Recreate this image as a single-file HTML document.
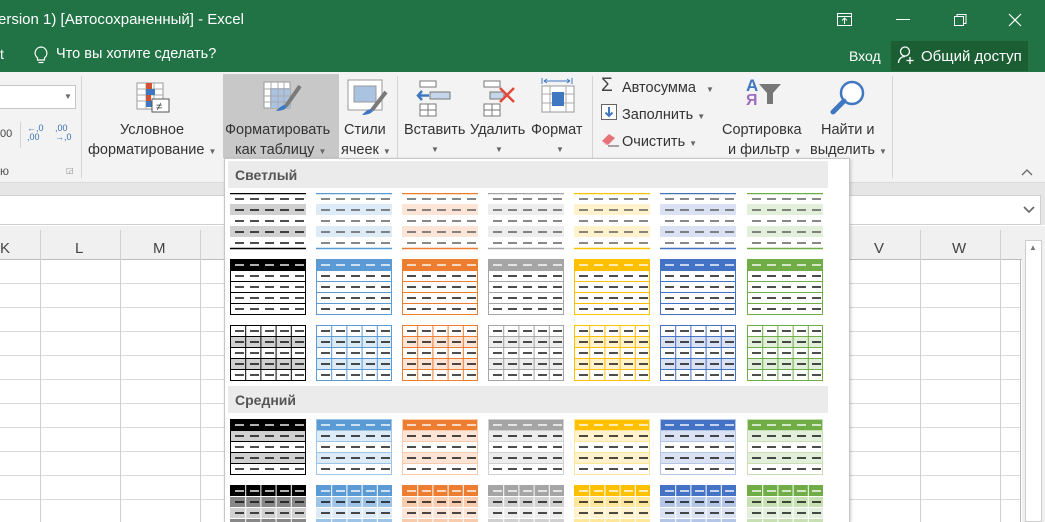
<!DOCTYPE html>
<html><head><meta charset="utf-8">
<style>
*{margin:0;padding:0;box-sizing:border-box}
html{width:1045px;height:522px;overflow:hidden}
body{width:1045px;height:522px;overflow:hidden;position:relative;background:#fff;font-family:"Liberation Sans","DejaVu Sans",sans-serif;color:#262626}
.a{position:absolute;white-space:nowrap}
#title{left:0;top:0;width:1045px;height:72px;background:#217346;color:#fff}
#ribbon{left:0;top:72px;width:1045px;height:111px;background:#f3f3f3;border-bottom:1px solid #dadada}
.t{font-size:14.5px;color:#333}
.sep{position:absolute;width:1px;background:#d4d4d4}
.car{font-size:8px;color:#666}
</style></head><body>
<div id="title" class="a">
 <div class="a" style="left:-2px;top:11px;font-size:15px">ersion 1) [Автосохраненный] - Excel</div>
 <div class="a" style="left:0;top:46px;font-size:14px">t</div>
 <svg class="a" style="left:33px;top:45px" width="16" height="20"><path d="M8 2a6 6 0 0 0-3.5 10.8V15h7v-2.2A6 6 0 0 0 8 2zM5.5 17.5h5" stroke="#fff" fill="none" stroke-width="1.2"/></svg>
 <div class="a" style="left:56px;top:46px;font-size:14.5px">Что вы хотите сделать?</div>
 <svg class="a" style="left:836px;top:12px" width="18" height="16"><rect x="1.5" y="1.5" width="14" height="12" stroke="#fff" fill="none"/><path d="M1.5 4.5h14M8.5 12V6M6 8.5l2.5-2.5 2.5 2.5" stroke="#fff" fill="none"/></svg>
 <div class="a" style="left:896px;top:19px;width:14px;height:1px;background:#fff"></div>
 <svg class="a" style="left:952px;top:12px" width="16" height="16"><rect x="2.5" y="4.5" width="9" height="9" stroke="#fff" fill="none"/><path d="M5 4.5V2.5h9v9h-2" stroke="#fff" fill="none"/></svg>
 <svg class="a" style="left:1007px;top:12px" width="16" height="16"><path d="M2 2l12 12M14 2L2 14" stroke="#fff" stroke-width="1.2"/></svg>
 <div class="a" style="left:849px;top:48px;font-size:14px">Вход</div>
 <div class="a" style="left:891px;top:41px;width:137px;height:30px;background:#1b5e34"></div>
 <svg class="a" style="left:897px;top:45px" width="20" height="20"><circle cx="8" cy="6.5" r="4.5" stroke="#fff" fill="none" stroke-width="1.3"/><path d="M1.5 18c0-4 3-6.5 6.5-6.5M13 12v7M9.5 15.5h7" stroke="#fff" fill="none" stroke-width="1.3"/></svg>
 <div class="a" style="left:921px;top:48px;font-size:15px">Общий доступ</div>
</div>

<div id="ribbon" class="a">
 <div class="a" style="left:0;top:13px;width:76px;height:24px;background:#fff;border:1px solid #c6c6c6;border-left:none"></div>
 <div class="a car" style="left:64px;top:20px">▼</div>
 <div class="a" style="left:0;top:56px;font-size:11px;color:#444">00</div>
 <div class="a" style="left:27px;top:52px;font-size:9px;color:#3a6fb0;line-height:9px">←,0<br>,00</div>
 <div class="a" style="left:55px;top:52px;font-size:9px;color:#3a6fb0;line-height:9px">,00<br>→,0</div>
 <div class="sep" style="left:20px;top:50px;height:26px"></div>
 <div class="a" style="left:0;top:92px;font-size:12px;color:#555">ю</div>
 <div class="a" style="left:66px;top:94px;font-size:8px;color:#888">◲</div>
 <div class="sep" style="left:81px;top:4px;height:102px"></div>

 <svg class="a" style="left:136px;top:10px" width="38" height="38"><rect x="1" y="1" width="26" height="26" fill="#fff" stroke="#999"/><path d="M1 7h26M1 13h26M1 19h26M10 1v26M18 1v26" stroke="#aaa"/><rect x="10" y="1" width="6" height="6" fill="#d35230"/><rect x="10" y="7" width="9" height="6" fill="#3f78c0"/><rect x="10" y="13" width="5" height="6" fill="#d35230"/><rect x="10" y="19" width="7" height="6" fill="#3f78c0"/><rect x="16" y="17" width="17" height="13" fill="#fff" stroke="#555"/><text x="20" y="28" font-size="11" fill="#333">≠</text></svg>
 <div class="a t" style="left:120px;top:50px">Условное</div>
 <div class="a t" style="left:88px;top:70px">форматирование <span class="car">▼</span></div>

 <div class="a" style="left:223px;top:2px;width:116px;height:84px;background:#c8c8c8"></div>
 <svg class="a" style="left:262px;top:8px" width="42" height="38"><rect x="2" y="2" width="26" height="26" fill="#fff" stroke="#999"/><rect x="8" y="8" width="20" height="20" fill="#a9c3e0"/><path d="M2 9h26M2 16h26M2 22h26M9 2v26M16 2v26M22 2v26" stroke="#aaa"/><path d="M38 6L24 26" stroke="#7a7a7a" stroke-width="4"/><path d="M23 25c-3 0-6 3-9 6 4 0 9-1 11-4z" fill="#3f78c0"/></svg>
 <div class="a t" style="left:225px;top:50px">Форматировать</div>
 <div class="a t" style="left:235px;top:70px">как таблицу <span class="car">▼</span></div>

 <svg class="a" style="left:346px;top:6px" width="42" height="40"><rect x="2" y="2" width="34" height="30" fill="#fff" stroke="#999"/><rect x="8" y="8" width="22" height="16" fill="#a9c3e0" stroke="#999"/><path d="M40 14L26 32" stroke="#7a7a7a" stroke-width="4"/><path d="M25 31c-3 0-6 3-9 6 4 0 9-1 11-4z" fill="#3f78c0"/></svg>
 <div class="a t" style="left:344px;top:50px">Стили</div>
 <div class="a t" style="left:341px;top:70px">ячеек <span class="car">▼</span></div>
 <div class="sep" style="left:397px;top:4px;height:102px"></div>

 <svg class="a" style="left:415px;top:8px" width="40" height="38"><rect x="5" y="1" width="16" height="6" fill="#fff" stroke="#777"/><rect x="15" y="12" width="20" height="7" fill="#c6d6ea" stroke="#777"/><path d="M14 15.5H3M7 11l-4 4.5 4 4.5" stroke="#3f78c0" stroke-width="2.5" fill="none"/><rect x="5" y="24" width="16" height="12" fill="#fff" stroke="#777"/><path d="M5 30h16M13 24v12" stroke="#777"/></svg>
 <div class="a t" style="left:404px;top:50px">Вставить</div>
 <div class="a car" style="left:431px;top:73px">▼</div>
 <svg class="a" style="left:480px;top:8px" width="40" height="38"><rect x="4" y="1" width="16" height="6" fill="#fff" stroke="#777"/><rect x="10" y="12" width="14" height="7" fill="#c6d6ea" stroke="#777"/><path d="M20 8l14 14M34 8L20 22" stroke="#e04a3a" stroke-width="2.5"/><rect x="4" y="24" width="16" height="12" fill="#fff" stroke="#777"/><path d="M4 30h16M12 24v12" stroke="#777"/></svg>
 <div class="a t" style="left:470px;top:50px">Удалить</div>
 <div class="a car" style="left:495px;top:73px">▼</div>
 <svg class="a" style="left:540px;top:4px" width="36" height="44"><path d="M2 2v6M32 2v6M4 5h26M4 5l3-2M4 5l3 2M30 5l-3-2M30 5l-3 2" stroke="#3f78c0" fill="none"/><rect x="2" y="10" width="32" height="26" fill="#fff" stroke="#999"/><path d="M2 18h32M2 27h32M10 10v26M26 10v26" stroke="#aaa"/><rect x="12" y="16" width="12" height="14" fill="#3f78c0"/></svg>
 <div class="a t" style="left:531px;top:50px">Формат</div>
 <div class="a car" style="left:556px;top:73px">▼</div>
 <div class="sep" style="left:592px;top:4px;height:102px"></div>

 <div class="a" style="left:601px;top:3px;font-size:19px;color:#444">Σ</div>
 <div class="a t" style="left:622px;top:8px">Автосумма <span class="car" style="margin-left:6px">▼</span></div>
 <svg class="a" style="left:601px;top:32px" width="16" height="16"><rect x="0.5" y="0.5" width="15" height="15" fill="#fff" stroke="#666"/><path d="M8 3v9M4.5 8.5L8 12l3.5-3.5" stroke="#3f78c0" stroke-width="2" fill="none"/></svg>
 <div class="a t" style="left:622px;top:35px">Заполнить <span class="car">▼</span></div>
 <svg class="a" style="left:600px;top:59px" width="20" height="16"><path d="M2 10l7-7 6 4-7 7z" fill="#e8727a"/><path d="M2 10l4 4h2" fill="#f2a8ad"/><path d="M8 15h11" stroke="#555"/></svg>
 <div class="a t" style="left:622px;top:62px">Очистить <span class="car">▼</span></div>

 <div class="a" style="left:746px;top:4px;font-size:17px;font-weight:bold;color:#3f78c0">A</div>
 <div class="a" style="left:746px;top:20px;font-size:16px;font-weight:bold;color:#9b6fbf">Я</div>
 <svg class="a" style="left:757px;top:10px" width="26" height="24"><path d="M2 2h22l-8 9v11h-6V11z" fill="#777"/></svg>
 <div class="a t" style="left:722px;top:50px">Сортировка</div>
 <div class="a t" style="left:728px;top:70px">и фильтр <span class="car">▼</span></div>
 <svg class="a" style="left:828px;top:6px" width="40" height="40"><circle cx="24" cy="15" r="11" fill="#fff" stroke="#3f78c0" stroke-width="2.5"/><path d="M16 23L5 34" stroke="#3f78c0" stroke-width="5" stroke-linecap="round"/></svg>
 <div class="a t" style="left:821px;top:50px">Найти и</div>
 <div class="a t" style="left:810px;top:70px">выделить <span class="car">▼</span></div>
 <div class="sep" style="left:892px;top:4px;height:102px"></div>
 <svg class="a" style="left:1021px;top:96px" width="12" height="8"><path d="M1 7l5-5 5 5" stroke="#666" fill="none" stroke-width="1.3"/></svg>
</div>

<div class="a" style="left:0;top:183px;width:1045px;height:42px;background:#e6e6e6"></div>
<div class="a" style="left:0;top:195px;width:1041px;height:30px;background:#fff;border:1px solid #d0d0d0;border-left:none"></div>
<svg class="a" style="left:1023px;top:206px" width="12" height="8"><path d="M1 1l5 5 5-5" stroke="#666" fill="none" stroke-width="1.6"/></svg>
<div class="a" style="left:0;top:226px;width:1045px;height:34px;background:#f0f0f0;border-bottom:1px solid #bdbdbd"></div>
<div class="a" style="left:0;top:240px;font-size:15px;color:#444">K</div>
<div class="a" style="left:75px;top:240px;font-size:15px;color:#444">L</div>
<div class="a" style="left:153px;top:240px;font-size:15px;color:#444">M</div>
<div class="a" style="left:874px;top:240px;font-size:15px;color:#444">V</div>
<div class="a" style="left:952px;top:240px;font-size:15px;color:#444">W</div>
<div id="grid" class="a" style="left:0;top:260px;width:1021px;height:262px;background-image:repeating-linear-gradient(to bottom,transparent 0 23px,#d9d9d9 23px 24px);border-right:1px solid #bbb"></div>
<div class="a" style="left:40px;top:230px;width:1px;height:292px;background:#d0d0d0"></div>
<div class="a" style="left:120px;top:230px;width:1px;height:292px;background:#d0d0d0"></div>
<div class="a" style="left:200px;top:230px;width:1px;height:292px;background:#d0d0d0"></div>
<div class="a" style="left:920px;top:230px;width:1px;height:292px;background:#d0d0d0"></div>
<div class="a" style="left:1000px;top:230px;width:1px;height:292px;background:#d0d0d0"></div>
<div class="a" style="left:1022px;top:226px;width:23px;height:296px;background:#f0f0f0"></div>
<div class="a" style="left:1025px;top:240px;width:17px;height:282px;background:#fff;border:1px solid #ccc"></div>
<div class="a" style="left:1029px;top:243px;font-size:8px;color:#777">▲</div>

<div class="a" style="left:224px;top:158px;width:626px;height:364px;overflow:hidden;background:#fff;border:1px solid #c6c6c6;border-bottom:none;box-shadow:1px 1px 3px rgba(0,0,0,.2)">
 <div class="a" style="left:3px;top:2px;width:600px;height:27px;background:#ebebeb"></div>
 <div class="a" style="left:10px;top:8px;font-size:14px;font-weight:bold;color:#555">Светлый</div>
 <div class="a" style="left:3px;top:227px;width:600px;height:27px;background:#ebebeb"></div>
 <div class="a" style="left:10px;top:233px;font-size:14px;font-weight:bold;color:#555">Средний</div>
 <div id="th"></div>
</div>
<script>
var C=[["#000","#d0d0d0","#888"],["#5b9bd5","#ddebf7","#9dc3e6"],["#ed7d31","#fce4d6","#f8cbad"],["#a5a5a5","#ededed","#d0d0d0"],["#ffc000","#fff2cc","#ffe699"],["#4472c4","#d9e1f2","#b4c6e7"],["#70ad47","#e2efda","#c6e0b4"]];
var xs=[5,91,177,263,349,435,522],ys=[34,100,166,260,326];
var h="";
function dashes(y,col){var s="";for(var i=0;i<5;i++)s+='<path d="M'+(5+i*15)+' '+y+'h9" stroke="'+col+'" stroke-width="1.4"/>';return s;}
for(var r=0;r<5;r++)for(var c=0;c<7;c++){
 var k=C[c],s='<svg class="a" style="left:'+xs[c]+'px;top:'+ys[r]+'px" width="77" height="57">';
 var line=c==0?"#000":k[0];
 if(r==0){
  s+='<rect x="0" y="11" width="76" height="11" fill="'+k[1]+'"/><rect x="0" y="33" width="76" height="11" fill="'+k[1]+'"/>';
  s+='<path d="M0 .5h76M0 55.5h76" stroke="'+line+'" stroke-width="1.5"/>';
  for(var j=0;j<5;j++)s+=dashes(6+j*11,c==0?"#000":"#555");
 }else if(r==1){
  s+='<rect x="0" y="0" width="76" height="11" fill="'+line+'"/><rect x=".5" y=".5" width="75" height="55" fill="none" stroke="'+line+'"/>';
  for(var j=1;j<5;j++)s+='<path d="M0 '+(j*11+.5)+'h76" stroke="'+line+'"/>';
  s+=dashes(6,"#fff");for(var j=1;j<5;j++)s+=dashes(6+j*11,"#000");
 }else if(r==2){
  s+='<rect x="0" y="11" width="76" height="11" fill="'+k[1]+'"/><rect x="0" y="33" width="76" height="11" fill="'+k[1]+'"/>';
  s+='<rect x=".5" y=".5" width="75" height="55" fill="none" stroke="'+line+'"/>';
  for(var j=1;j<5;j++)s+='<path d="M0 '+(j*11+.5)+'h76" stroke="'+line+'"/>';
  for(var j=1;j<5;j++)s+='<path d="M'+(j*15.2+.5)+' 0v56" stroke="'+line+'"/>';
  for(var j=0;j<5;j++)s+=dashes(6+j*11,"#000");
 }else if(r==3){
  s+='<rect x="0" y="0" width="76" height="11" fill="'+line+'"/><rect x="0" y="11" width="76" height="11" fill="'+k[1]+'"/><rect x="0" y="33" width="76" height="11" fill="'+k[1]+'"/>';
  s+='<rect x=".5" y=".5" width="75" height="55" fill="none" stroke="'+(c==0?"#000":k[2])+'"/>';
  for(var j=1;j<5;j++)s+='<path d="M0 '+(j*11+.5)+'h76" stroke="'+(c==0?"#000":k[2])+'"/>';
  s+=dashes(6,"#fff");for(var j=1;j<5;j++)s+=dashes(6+j*11,"#000");
 }else{
  s+='<rect x="0" y="0" width="76" height="11" fill="'+line+'"/><rect x="0" y="11" width="76" height="11" fill="'+k[2]+'"/><rect x="0" y="22" width="76" height="11" fill="'+k[1]+'"/><rect x="0" y="33" width="76" height="11" fill="'+k[2]+'"/><rect x="0" y="44" width="76" height="12" fill="'+k[1]+'"/>';
  for(var j=1;j<5;j++)s+='<path d="M0 '+(j*11+.5)+'h76M'+(j*15.2+.5)+' 0v56" stroke="#fff"/>';
  s+=dashes(6,"#fff");for(var j=1;j<5;j++)s+=dashes(6+j*11,"#000");
 }
 h+=s+'</svg>';
}
document.getElementById("th").innerHTML=h;
</script>
</body></html>
